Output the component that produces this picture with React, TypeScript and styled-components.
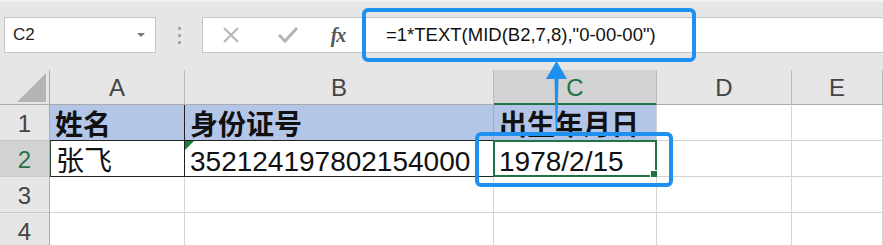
import React from 'react';
import styled, { createGlobalStyle, css } from 'styled-components';

const GlobalStyle = createGlobalStyle`
  html, body {
    margin: 0;
    padding: 0;
    background: #e6e6e6;
  }
`;

const BLUE = '#1e90f0';
const GREEN = '#217346';
const GRID = '#d4d4d4';

const Page = styled.div`
  position: relative;
  width: 883px;
  height: 245px;
  overflow: hidden;
  background: #e6e6e6;
  font-family: 'Liberation Sans', 'Noto Sans CJK SC', sans-serif;
`;

const Toolbar = styled.div`
  height: 70px;
  box-sizing: border-box;
  border-top: 2px solid #f2f2f2;
  padding: 15px 0 0 4px;
  display: flex;
  align-items: flex-start;
`;

const NameBox = styled.div`
  width: 152px;
  height: 36px;
  box-sizing: border-box;
  background: #fff;
  border: 1px solid #c6c6c6;
  display: flex;
  align-items: center;
  justify-content: space-between;
  padding: 0 8px 0 8px;
  font-size: 17px;
  color: #222;
`;

const DropArrow = styled.span`
  width: 0;
  height: 0;
  border-left: 4px solid transparent;
  border-right: 4px solid transparent;
  border-top: 4px solid #7a7a7a;
  margin-right: 2px;
`;

const Grip = styled.div`
  width: 46px;
  height: 36px;
  display: flex;
  flex-direction: column;
  align-items: center;
  justify-content: center;
  gap: 4px;
`;

const GripDot = styled.span`
  width: 3px;
  height: 3px;
  background: #a8a8a8;
`;

const FormulaBar = styled.div`
  flex: 1;
  height: 36px;
  box-sizing: border-box;
  background: #fff;
  border: 1px solid #c6c6c6;
  border-right: none;
  display: flex;
  align-items: center;
`;

const BarButton = styled.div<{ $w: number }>`
  width: ${(p) => p.$w}px;
  height: 100%;
  display: flex;
  align-items: center;
  justify-content: center;
`;

const Fx = styled.span`
  font-family: 'Liberation Serif', serif;
  font-style: italic;
  font-weight: bold;
  font-size: 20px;
  color: #555;
  letter-spacing: -1px;
`;

const FormulaText = styled.div`
  padding-left: 27px;
  font-size: 18.5px;
  color: #111;
  white-space: nowrap;
`;

const Sheet = styled.div`
  display: grid;
  grid-template-columns: 50px 135px 309px 163px 135px 1fr;
  grid-template-rows: 35px 36px 36px 36px 36px;
`;

const Corner = styled.div`
  background: #e6e6e6;
  border-right: 1px solid #ababab;
  border-bottom: 1px solid #ababab;
  box-sizing: border-box;
  display: flex;
  align-items: flex-end;
  justify-content: flex-end;
  padding: 0 3px 2px 0;
`;

const CornerTri = styled.span`
  width: 0;
  height: 0;
  border-left: 29px solid transparent;
  border-bottom: 29px solid #b4b4b4;
`;

const ColHead = styled.div<{ $active?: boolean }>`
  box-sizing: border-box;
  background: ${(p) => (p.$active ? '#d2d2d2' : '#e6e6e6')};
  color: ${(p) => (p.$active ? GREEN : '#444')};
  border-right: 1px solid #bdbdbd;
  border-bottom: ${(p) => (p.$active ? `2px solid ${GREEN}` : '1px solid #ababab')};
  font-size: 24px;
  display: flex;
  align-items: center;
  justify-content: center;
  padding-top: 2px;
`;

const RowHead = styled.div<{ $active?: boolean }>`
  box-sizing: border-box;
  background: ${(p) => (p.$active ? '#d2d2d2' : '#e6e6e6')};
  color: ${(p) => (p.$active ? GREEN : '#444')};
  border-right: 1px solid #ababab;
  border-bottom: 1px solid #c8c8c8;
  font-size: 24px;
  display: flex;
  align-items: center;
  justify-content: center;
  padding-top: 3px;
`;

type Edge = string | undefined;

const Cell = styled.div<{
  $fill?: string;
  $right?: Edge;
  $bottom?: Edge;
  $left?: Edge;
  $bold?: boolean;
}>`
  position: relative;
  box-sizing: border-box;
  background: ${(p) => p.$fill || '#fff'};
  border-right: 1px solid ${(p) => p.$right || GRID};
  border-bottom: 1px solid ${(p) => p.$bottom || GRID};
  ${(p) =>
    p.$left &&
    css`
      border-left: 1px solid ${p.$left};
    `}
  font-size: 28px;
  font-weight: ${(p) => (p.$bold ? 'bold' : 'normal')};
  line-height: 1;
  color: #111;
  display: flex;
  align-items: flex-end;
  padding-left: 5px;
  white-space: nowrap;
`;

const ErrorMark = styled.span`
  position: absolute;
  top: 0;
  left: 0;
  width: 0;
  height: 0;
  border-top: 9px solid #1e7b34;
  border-right: 9px solid transparent;
`;

const Selection = styled.span`
  position: absolute;
  top: -1px;
  left: -1px;
  right: -1px;
  bottom: -1px;
  border: 2px solid ${GREEN};
  pointer-events: none;
`;

const FillHandle = styled.span`
  position: absolute;
  right: -4px;
  bottom: -4px;
  width: 7px;
  height: 7px;
  background: ${GREEN};
  border: 1px solid #fff;
`;

const Callout = styled.div<{ $x: number; $y: number; $w: number; $h: number }>`
  position: absolute;
  left: ${(p) => p.$x}px;
  top: ${(p) => p.$y}px;
  width: ${(p) => p.$w}px;
  height: ${(p) => p.$h}px;
  box-sizing: border-box;
  border: 4px solid ${BLUE};
  border-radius: 6px;
  pointer-events: none;
`;

const ArrowLayer = styled.svg`
  position: absolute;
  left: 0;
  top: 0;
  pointer-events: none;
`;

const CrossIcon = () => (
  <svg width="20" height="20" viewBox="0 0 20 20">
    <path d="M3 3 L17 17 M17 3 L3 17" stroke="#b5b5b5" strokeWidth="2" fill="none" />
  </svg>
);

const CheckIcon = () => (
  <svg width="22" height="20" viewBox="0 0 22 20">
    <path d="M2 10 L8 16 L20 3" stroke="#b5b5b5" strokeWidth="3" fill="none" />
  </svg>
);

const columns = ['A', 'B', 'C', 'D', 'E'];

const App: React.FC = () => {
  return (
    <>
      <GlobalStyle />
      <Page>
        <Toolbar>
          <NameBox>
            <span>C2</span>
            <DropArrow />
          </NameBox>
          <Grip>
            <GripDot />
            <GripDot />
            <GripDot />
          </Grip>
          <FormulaBar>
            <BarButton $w={56}>
              <CrossIcon />
            </BarButton>
            <BarButton $w={58}>
              <CheckIcon />
            </BarButton>
            <BarButton $w={42}>
              <Fx>fx</Fx>
            </BarButton>
            <FormulaText>=1*TEXT(MID(B2,7,8),"0-00-00")</FormulaText>
          </FormulaBar>
        </Toolbar>

        <Sheet>
          <Corner>
            <CornerTri />
          </Corner>
          {columns.map((c) => (
            <ColHead key={c} $active={c === 'C'}>
              {c}
            </ColHead>
          ))}

          <RowHead>1</RowHead>
          <Cell $fill="#b4c6e7" $bold $right="#222" $bottom="#222">姓名</Cell>
          <Cell $fill="#b4c6e7" $bold $bottom="#222" $right="#9aa8c0">身份证号</Cell>
          <Cell $fill="#b4c6e7" $bold>出生年月日</Cell>
          <Cell />
          <Cell />

          <RowHead $active>2</RowHead>
          <Cell $right="#222" $bottom="#222" $left="#2c4a38">张飞</Cell>
          <Cell $bottom="#222">
            <ErrorMark />
            352124197802154000
          </Cell>
          <Cell>
            1978/2/15
            <Selection>
              <FillHandle />
            </Selection>
          </Cell>
          <Cell />
          <Cell />

          {[3, 4].map((r) => (
            <React.Fragment key={r}>
              <RowHead>{r}</RowHead>
              <Cell />
              <Cell />
              <Cell />
              <Cell />
              <Cell />
            </React.Fragment>
          ))}
        </Sheet>

        <Callout $x={362} $y={8} $w={334} $h={54} />
        <Callout $x={475} $y={132} $w={198} $h={55} />
        <ArrowLayer width="883" height="245">
          <polygon points="554.5,77 558.5,77 557.3,129 555.7,129" fill={BLUE} />
          <polygon points="546,79 556.5,61 567,79" fill={BLUE} />
        </ArrowLayer>
      </Page>
    </>
  );
};

export default App;
